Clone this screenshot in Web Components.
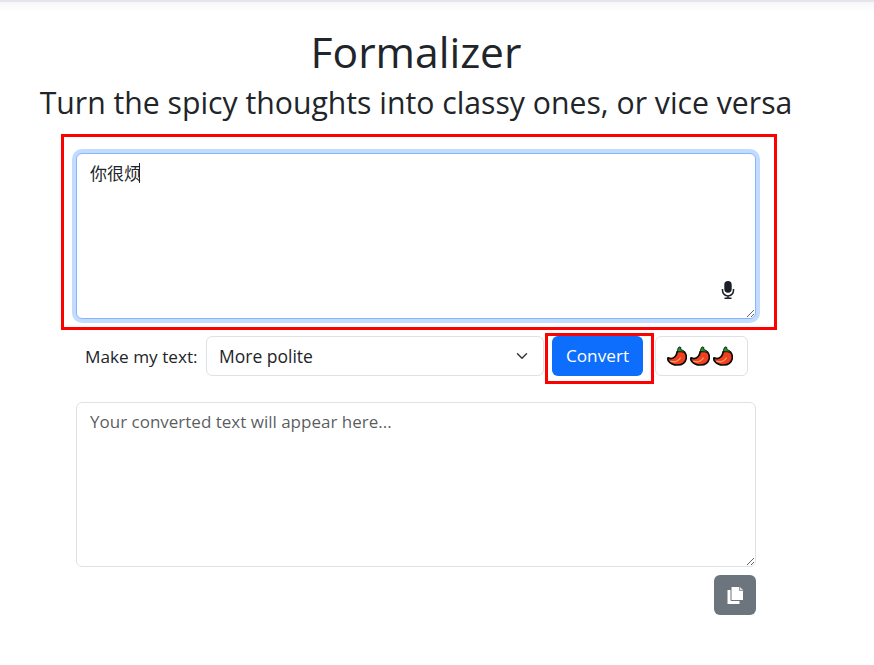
<!DOCTYPE html>
<html lang="en">
<head>
<meta charset="utf-8">
<title>Formalizer</title>
<style>
  html, body { margin: 0; background: #fff; }
  body { font-family: "Open Sans", "Noto Sans CJK SC", sans-serif; color: #212529; }
</style>
</head>
<body>
<formalizer-app></formalizer-app>

<template id="chili-tpl">
  <style>
    :host { display: block; width: 20px; height: 20px; }
    svg { display: block; width: 100%; height: 100%; }
  </style>
  <svg viewBox="0 0 20 20">
    <path d="M1.200 11.800c2.500 1.200 5.300.6 7-1.300 1.300-1.500 1.700-3 1.900-4.700l2.900-1.300 4.500 1.500c1.500 2 2.200 4.500 1.600 7-.9 3.700-4.400 5.900-8.500 6-3.800.1-7-1.200-8.900-3.800-1-1.400-1.200-3-.5-3.400z" fill="#f0401f" stroke="#0c0c0c" stroke-width="1.700" stroke-linejoin="round"/>
    <path d="M3.800 15.400c3.800 1 7.500-.2 9.500-3.400" fill="none" stroke="#fb9a5c" stroke-width="1.400" stroke-linecap="round"/>
    <path d="M10.600 5.800c-.3-1.800.3-3.600 1.500-4.900l1.800.6c-.3 1-.2 1.800.3 2.300 1.500.3 2.800 1.100 3.600 2.500-2.100-.5-4.900-.7-7.200-.5z" fill="#1f9a22" stroke="#0c0c0c" stroke-width=".9" stroke-linejoin="round"/>
  </svg>
</template>

<script>
class FzChili extends HTMLElement {
  constructor() {
    super();
    this.attachShadow({mode: 'open'}).appendChild(document.getElementById('chili-tpl').content.cloneNode(true));
  }
}
customElements.define('fz-chili', FzChili);

class FzHeading extends HTMLElement {
  constructor() {
    super();
    this.attachShadow({mode: 'open'}).innerHTML = `
      <style>
        :host { display: block; text-align: center; width: 832px; }
        h1 { margin: 0; font-size: 42.6px; font-weight: 400; line-height: 48px; }
        h2 { margin: 11px 0 0; font-size: 30.2px; font-weight: 400; line-height: 34px; white-space: nowrap; }
      </style>
      <h1>Formalizer</h1>
      <h2>Turn the spicy thoughts into classy ones, or vice versa</h2>
    `;
  }
}
customElements.define('fz-heading', FzHeading);

class FzInputBox extends HTMLElement {
  constructor() {
    super();
    this.attachShadow({mode: 'open'}).innerHTML = `
      <style>
        :host { display: block; border: 3px solid #f00; padding: 16px 18px 8px 12px; position: relative; }
        textarea {
          display: block; box-sizing: border-box; width: 680px; height: 166px; margin: 0;
          padding: 7px 12px 6px 13px; font: 17px/24px "Noto Sans CJK SC", "Open Sans", sans-serif; color: #212529;
          border: 1px solid #86b7fe; border-radius: 6px; outline: 0; box-shadow: 0 0 0 4px #c2dbfe;
          caret-color: transparent;
        }
        .caret { position: absolute; left: 75px; top: 26px; width: 1px; height: 20px; background: #212529; }
        .mic { position: absolute; right: 38px; bottom: 28px; width: 16px; height: 18px; display: block; }
      </style>
      <textarea>你很烦</textarea>
      <span class="caret"></span>
      <svg class="mic" viewBox="0 0 16 18">
        <rect x="4.300" y="0" width="7.400" height="11.800" rx="3.700" fill="#1c2026"/>
        <path d="M2.500 8v1.500a5.500 5.500 0 0 0 11 0V8M8 15v2.500M4.500 17.300h7" fill="none" stroke="#1c2026" stroke-width="1.500"/>
      </svg>
    `;
  }
  connectedCallback() {
    this.shadowRoot.querySelector('textarea').focus();
  }
}
customElements.define('fz-input-box', FzInputBox);

class FzControls extends HTMLElement {
  constructor() {
    super();
    this.attachShadow({mode: 'open'}).innerHTML = `
      <style>
        :host { display: flex; align-items: center; font-size: 17.2px; height: 40px; padding-left: 9px; box-sizing: border-box; width: 680px; }
        label { width: 121px; flex: none; white-space: nowrap; }
        .select {
          box-sizing: border-box; width: 338px; height: 40px; flex: none; display: flex; align-items: center; justify-content: space-between;
          padding: 0 15px 0 12px; border: 1px solid #dee2e6; border-radius: 6px; line-height: 24px; font-size: 17.5px;
        }
        .select svg { width: 12px; height: 12px; display: block; }
        .convert {
          position: relative; box-sizing: border-box; width: 91px; height: 40px; margin-left: 8px; flex: none;
          border: 0; border-radius: 6px; background: #0d6efd; color: #fff; font: inherit; padding: 0 0 2px;
        }
        .convert::after {
          content: ""; position: absolute; left: -7px; right: -11px; top: -3px; bottom: -8px;
          border: 3px solid #f00;
        }
        .spice {
          box-sizing: border-box; width: 93px; height: 40px; margin-left: 12px; flex: none; display: flex; align-items: center; gap: 3px;
          padding-left: 11px; border: 1px solid #dee2e6; border-radius: 6px;
        }
      </style>
      <label>Make my text:</label>
      <div class="select">
        <span>More polite</span>
        <svg viewBox="0 0 16 16"><path d="M2 5l6 6 6-6" fill="none" stroke="#343a40" stroke-width="2" stroke-linecap="round" stroke-linejoin="round"/></svg>
      </div>
      <button class="convert">Convert</button>
      <div class="spice"><slot></slot></div>
    `;
  }
}
customElements.define('fz-controls', FzControls);

class FzOutputBox extends HTMLElement {
  constructor() {
    super();
    this.attachShadow({mode: 'open'}).innerHTML = `
      <style>
        :host { display: block; width: 680px; }
        textarea {
          display: block; box-sizing: border-box; width: 680px; height: 165px; margin: 0;
          padding: 7px 12px 6px 13px; font: 17px/24px "Open Sans", sans-serif; color: #212529;
          border: 1px solid #dee2e6; border-radius: 6px; outline: 0;
        }
        textarea::placeholder { color: rgba(33,37,41,.75); opacity: 1; }
        .row { display: flex; justify-content: flex-end; margin-top: 8px; }
        .copy {
          width: 42px; height: 40px; box-sizing: border-box; padding: 0; border: 0; border-radius: 6px;
          background: #6c757d; display: flex; align-items: center; justify-content: center;
        }
        .copy svg { width: 17px; height: 18px; display: block; }
      </style>
      <textarea placeholder="Your converted text will appear here..."></textarea>
      <div class="row">
        <button class="copy" aria-label="Copy">
          <svg viewBox="0 0 17 18">
            <path d="M.5 4h12v14H.5z" fill="#fff"/>
            <path d="M4 .5h8.500l4 4V14.500H4z" fill="#fff" stroke="#6c757d" stroke-width="1"/>
            <path d="M12.500.5v4h4" fill="#dfe3e6" stroke="#6c757d" stroke-width=".7"/>
          </svg>
        </button>
      </div>
    `;
  }
}
customElements.define('fz-output-box', FzOutputBox);

class FormalizerApp extends HTMLElement {
  constructor() {
    super();
    this.attachShadow({mode: 'open'}).innerHTML = `
      <style>
        :host { display: block; width: 874px; height: 665px; box-sizing: border-box; overflow: hidden; }
        .top { height: 2px; background: #e3e6ec; }
        .fade { height: 10px; background: linear-gradient(#f7f7f8, #fff); }
        main { width: 834px; padding-top: 15px; }
        fz-input-box { margin: 14px 0 0 61px; width: fit-content; }
        fz-controls { margin: 6px 0 0 76px; }
        fz-output-box { margin: 26px 0 0 76px; }
      </style>
      <div class="top"></div>
      <div class="fade"></div>
      <main>
        <fz-heading></fz-heading>
        <fz-input-box></fz-input-box>
        <fz-controls><fz-chili></fz-chili><fz-chili></fz-chili><fz-chili></fz-chili></fz-controls>
        <fz-output-box></fz-output-box>
      </main>
    `;
  }
}
customElements.define('formalizer-app', FormalizerApp);
</script>
</body>
</html>
